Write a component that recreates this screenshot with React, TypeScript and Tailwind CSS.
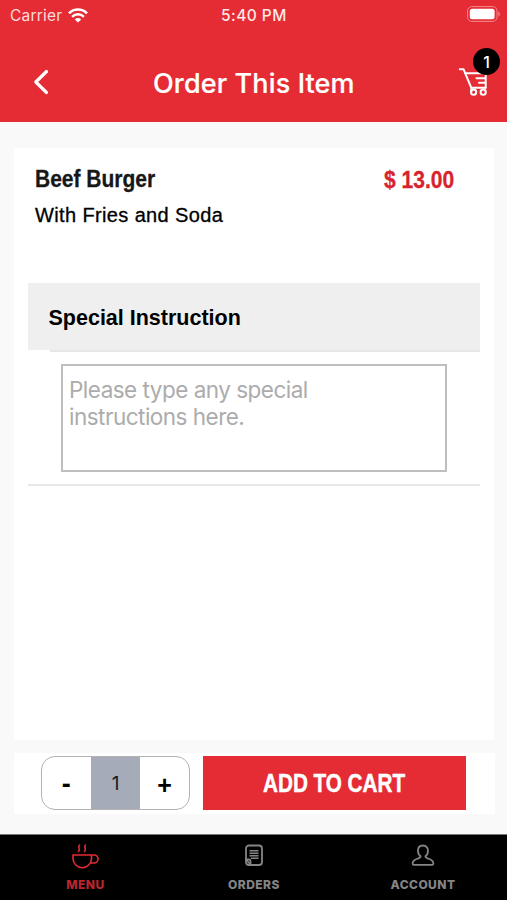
import React from "react";

function StatusBar() {
  return (
    <div className="relative h-[30px] flex items-center justify-between pl-[10px] pr-[6px] font-['Inter',sans-serif] text-[15.5px] leading-none">
      <div className="flex items-center gap-[6px] text-[#ffdcdc] pt-px">
        <span className="tracking-[0.2px]">Carrier</span>
        <svg width="20" height="15" viewBox="0 0 20 15" fill="none" stroke="#fff" strokeWidth="2.5">
          <path d="M1 5.4C6 .3 14 .3 19 5.4" />
          <path d="M4.1 8.8c3.3-3.3 8.5-3.3 11.8 0" />
          <path d="M6.8 11.4c1.8-1.8 4.6-1.8 6.4 0L10 14.6z" fill="#fff" stroke="none" />
        </svg>
      </div>
      <span className="absolute left-[221px] top-[8px] font-medium tracking-[0.45px] text-[#ffe8e8] whitespace-nowrap">5:40 PM</span>
      <svg className="-mt-[2px]" width="34" height="16" viewBox="0 0 34 16">
        <rect x=".6" y=".6" width="29.4" height="14.8" rx="4.2" fill="none" stroke="#f28a8e" />
        <rect x="2.8" y="2.8" width="24.8" height="10.4" rx="2.5" fill="#fff" />
        <path d="M31.5 5.6c1.6.7 1.6 4.1 0 4.8z" fill="#f5a0a3" />
      </svg>
    </div>
  );
}

function Header() {
  return (
    <header className="h-[122px] bg-[#e52b33] text-white">
      <StatusBar />
      <div className="flex h-[92px] items-start">
        <button className="ml-[32px] mt-[38px]">
          <svg width="18" height="28" viewBox="0 0 18 28" fill="none" stroke="#fff" strokeWidth="3.2" strokeLinecap="round" strokeLinejoin="round">
            <path d="M14.5 3.5 3.8 14l10.7 10.5" />
          </svg>
        </button>
        <h1 className="ml-[103px] mt-[37px] w-[259px] whitespace-nowrap font-['Inter',sans-serif] text-[27px] font-medium leading-[34px] tracking-[0.13px] [-webkit-text-stroke:0.2px_white]">
          Order This Item
        </h1>
        <div className="relative ml-[46px] mt-[37px]">
          <svg width="32" height="30" viewBox="0 0 32 30" fill="none" stroke="#fff" strokeWidth="2" strokeLinecap="round" strokeLinejoin="round">
            <path d="M1.8 2.2h3.7l7.8 18.6h14.4" />
            <path d="M7.3 6.2h20.4v14.6M18.5 11.2h9.2M21 15.8h6.7" />
            <circle cx="15.6" cy="25.2" r="2.6" />
            <circle cx="25.2" cy="25.2" r="2.6" />
            <path d="M13.3 20.8v4" />
          </svg>
          <span className="absolute left-[15px] -top-[19px] flex h-[27px] w-[27px] items-center justify-center rounded-full bg-black font-['Inter',sans-serif] text-[16px] font-medium">1</span>
        </div>
      </div>
    </header>
  );
}

function ItemCard() {
  return (
    <main className="mx-[14px] mt-[26px] w-[480px] h-[592px] bg-white pt-[16px] text-black">
      <div className="flex justify-between pl-[21px] pr-[40px] text-[24px] font-bold leading-[30px]">
        <h2 className="origin-left scale-x-[0.875] text-[#171717] [-webkit-text-stroke:0.3px_#171717]">Beef Burger</h2>
        <span className="origin-right scale-x-[0.875] pt-px text-[#d9222b] [-webkit-text-stroke:0.3px_#d9222b]">$ 13.00</span>
      </div>
      <p className="pl-[21px] mt-[8px] text-[20px] leading-[24px] tracking-[0.37px] [-webkit-text-stroke:0.3px_black]">With Fries and Soda</p>
      <section className="ml-[14px] mt-[56px] w-[452px] border-b-2 border-[#e8e8e8] h-[203px]">
        <h3 className="h-[67px] bg-[#efefef] pl-[20.5px] text-[21.5px] font-bold leading-[70px]">Special Instruction</h3>
        <div className="ml-[22px] h-[2px] bg-[#e6e6e6]" />
        <textarea
          className="ml-[33px] mt-[12px] block h-[108px] w-[386px] resize-none border-2 border-[#bebebe] bg-white px-[6px] pt-[10px] font-['Inter',sans-serif] text-[22.5px] leading-[27px] tracking-[-0.51px] outline-none placeholder:text-[#acacac]"
          placeholder={"Please type any special\ninstructions here."}
        />
      </section>
    </main>
  );
}

function AddBar() {
  return (
    <div className="mx-[14px] mt-[13px] flex h-[61px] w-[481px] items-start bg-white pt-[3px]">
      <div className="ml-[27px] flex h-[54px] w-[149px] overflow-hidden rounded-[14px] border border-[#b2b2b2] text-black">
        <button className="w-[49px] pt-[3px] text-[27px] font-bold leading-none">-</button>
        <span className="flex w-[50px] items-center justify-center bg-[#a5abb8] pt-[3px] font-['Inter',sans-serif] text-[19px] text-[#16181f]">1</span>
        <button className="w-[49px] pt-[4px] text-[25px] font-bold leading-none">+</button>
      </div>
      <button className="ml-[13px] flex h-[54px] w-[263px] items-center justify-center bg-[#e52b33] text-white">
        <span className="scale-x-[0.78] whitespace-nowrap pt-[2px] text-[26.5px] font-bold [-webkit-text-stroke:0.5px_white]">ADD TO CART</span>
      </button>
    </div>
  );
}

function TabBar() {
  return (
    <nav className="mt-[20px] grid h-[66px] grid-cols-3 border-t border-[#777] bg-black font-['Inter',sans-serif] text-[12px] font-extrabold leading-[14px] tracking-[0.45px] text-[#858585]">
      <div className="flex flex-col items-center pt-[8px] text-[#b9262d]">
        <svg width="30" height="26" viewBox="0 0 30 26" fill="none" stroke="#e52b33" strokeWidth="1.6" strokeLinecap="round" strokeLinejoin="round">
          <path d="M3 12h18.5v3.5a9.2 9.2 0 0 1-18.5 0zM21.5 12H24a3.8 3.8 0 0 1 0 8h-3.8" />
          <path d="M9.5 2c-2.5 2.5 1.8 3.5-1 6.5M15.5 2c-2.5 2.5 1.8 3.5-1 6.5" />
        </svg>
        <span className="mt-[9px] ml-[2px]">MENU</span>
      </div>
      <div className="flex flex-col items-center pt-[8px]">
        <svg width="22" height="26" viewBox="0 0 22 26" fill="none" stroke="currentColor" strokeWidth="1.8" strokeLinejoin="round">
          <path d="M6 2.5h10a3 3 0 0 1 3 3V19a3 3 0 0 1-3 3H8l-5-5.5v-11a3 3 0 0 1 3-3z" />
          <path d="M3 16.5h3A1.5 1.5 0 0 1 7.500 18v4H6a3 3 0 0 1-3-3z" />
          <path d="M6.5 7.8h9M6.5 10.3h9M6.5 12.8h9M8 15.3h7.5" strokeWidth="1.5" />
        </svg>
        <span className="mt-[9px] ml-px">ORDERS</span>
      </div>
      <div className="flex flex-col items-center pt-[8px]">
        <svg width="26" height="26" viewBox="0 0 26 26" fill="none" stroke="currentColor" strokeWidth="1.8" strokeLinejoin="round">
          <path d="M13 2.5c-3.4 0-5 2.4-5 5.2 0 2.4 1 4.4 2.6 5.6 0 3.2-8 1.700-8 7.200 0 .9.4 1.400 1.400 1.400h18c1 0 1.400-.5 1.400-1.400 0-5.500-8-4-8-7.200C17 12.100 18 10.100 18 7.700 18 4.900 16.400 2.500 13 2.500z" />
        </svg>
        <span className="mt-[9px] ml-px">ACCOUNT</span>
      </div>
    </nav>
  );
}

export default function App() {
  return (
    <div className="h-[900px] w-[507px] overflow-hidden bg-[#f9f9f9] font-['Liberation_Sans',Arial,sans-serif]">
      <Header />
      <ItemCard />
      <AddBar />
      <TabBar />
    </div>
  );
}
